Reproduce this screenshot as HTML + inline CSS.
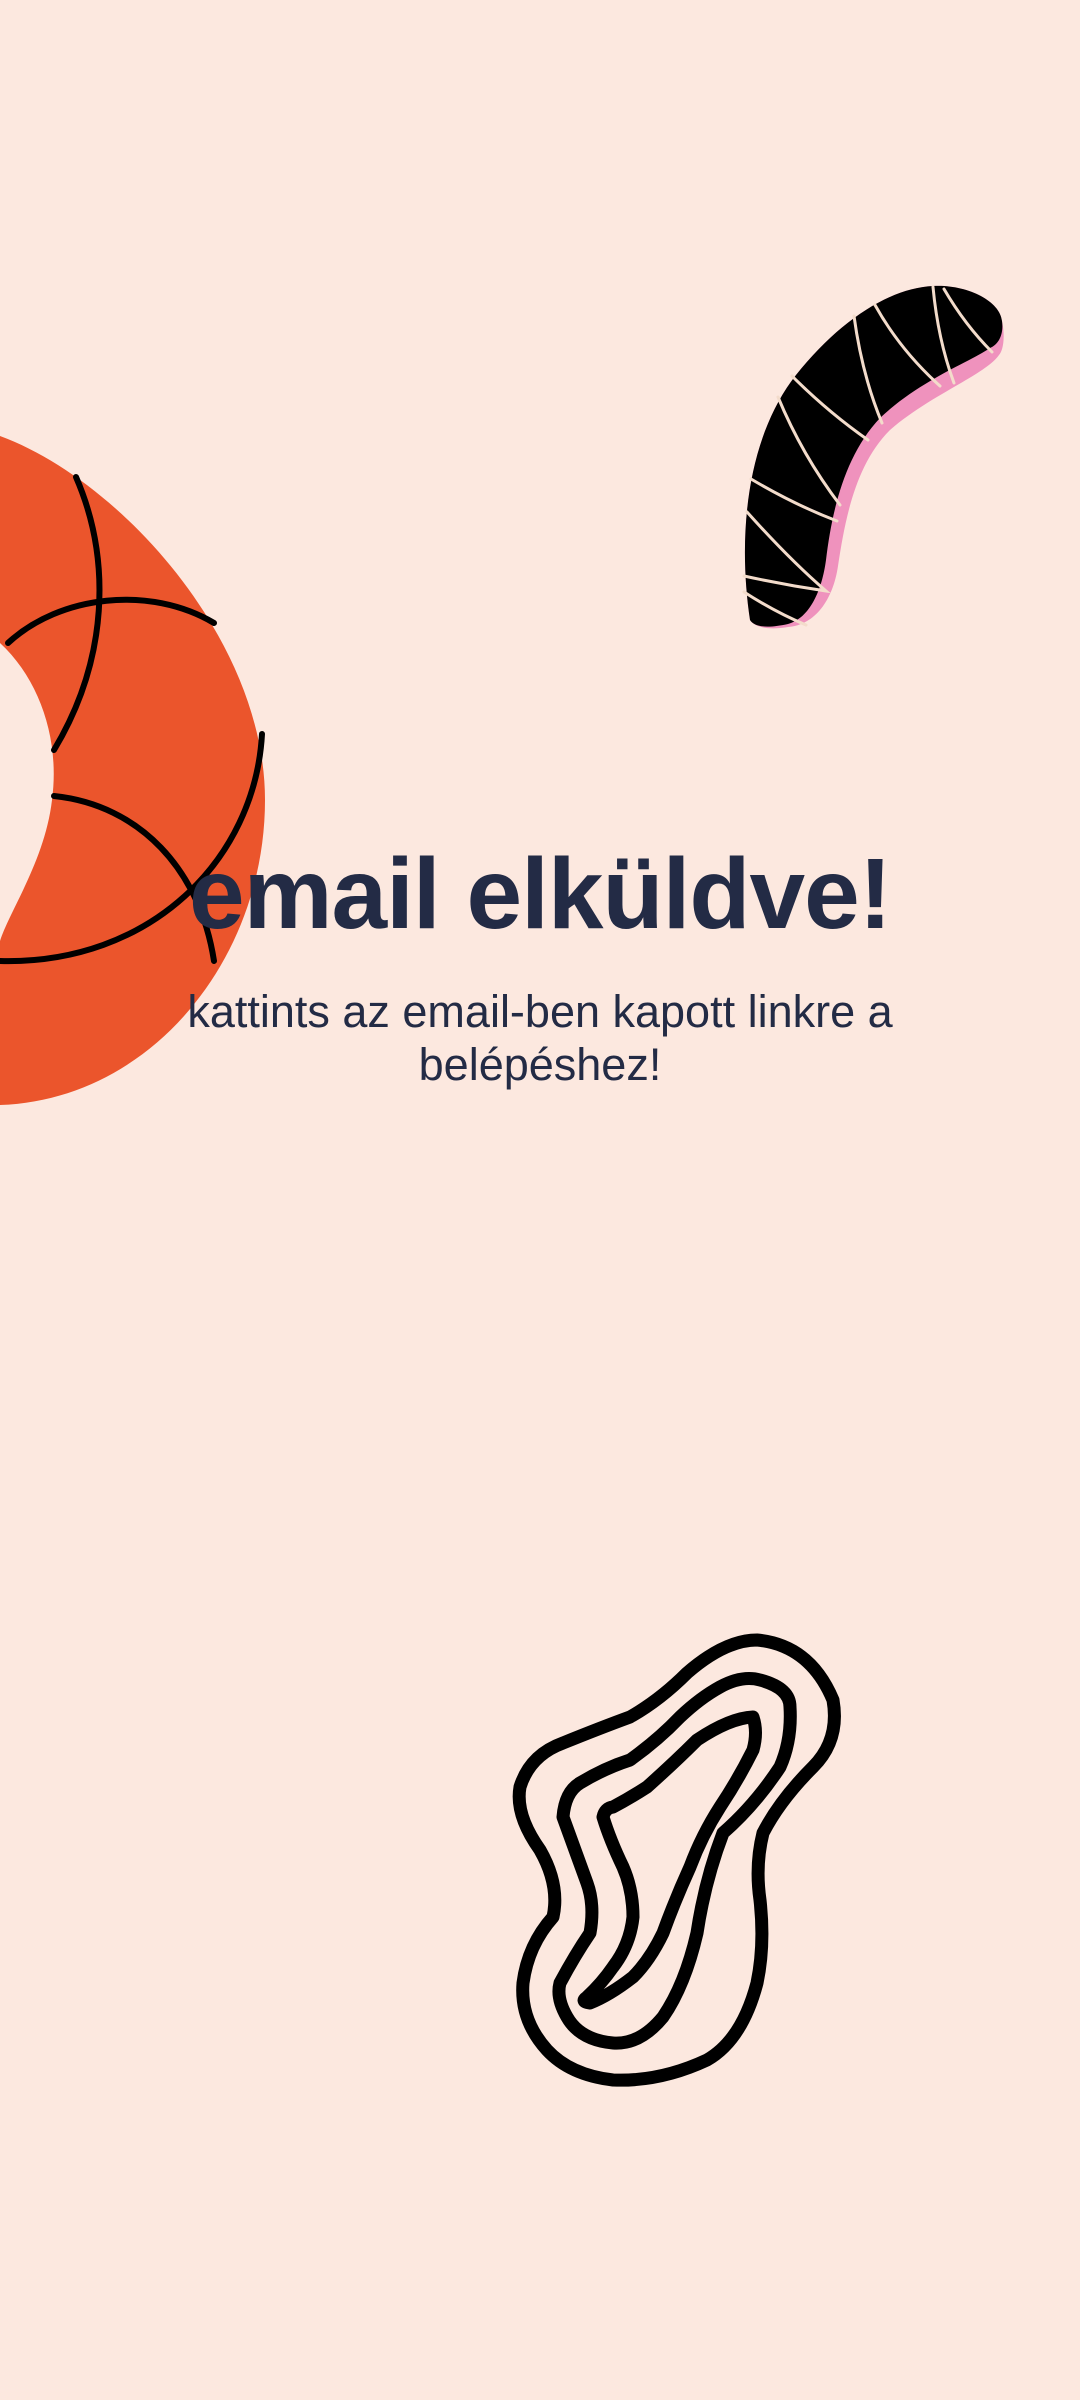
<!DOCTYPE html>
<html><head><meta charset="utf-8"><style>
html,body{margin:0;padding:0;}
body{width:1080px;height:2400px;background:#fce8df;position:relative;overflow:hidden;font-family:"Liberation Sans",sans-serif;}
svg{position:absolute;left:0;top:0;}
h1{position:absolute;left:0;width:1080px;top:834px;margin:0;text-align:center;font-size:100px;font-weight:bold;color:#232b45;letter-spacing:-1px;line-height:120px;}
p{position:absolute;left:100px;width:880px;top:985px;margin:0;text-align:center;font-size:45px;color:#232b45;line-height:53px;}
</style></head><body>
<svg width="1080" height="2400" viewBox="0 0 1080 2400">
  <path fill="#eb552c" fill-rule="evenodd" d="M0,436 C120,480 265,640 265,800 C265,960 150,1100 0,1105 Z M0,643 C40,680 60,740 52,800 C45,860 10,910 0,941 Z"/>
  <g fill="none" stroke="#000" stroke-width="6" stroke-linecap="round">
    <path d="M76,477 C112,560 108,660 54,750"/>
    <path d="M8,643 C60,595 150,585 214,623"/>
    <path d="M262,734 C255,860 150,965 0,961"/>
    <path d="M54,796 C140,805 200,870 214,961"/>
  </g>
  <path fill="#ef92bd" d="M750,620 C738,540 745,440 796,375 C840,320 890,288 933,286 C965,284 1000,300 1002,321 C1006,340 1002,352 999,355 C985,375 930,395 890,430 C855,465 845,520 838,566 C833,600 815,625 788,627 C770,630 755,628 750,620 Z"/>
  <path fill="#000" d="M750,620 C738,540 745,440 796,375 C840,320 890,288 933,286 C965,284 1000,300 1002,321 C1004,335 998,345 990,348 C970,362 920,380 880,418 C845,455 832,510 826,560 C822,590 810,618 788,624 C770,628 755,628 750,620 Z"/>
  <g fill="none" stroke="#f3dccb" stroke-width="3" stroke-linecap="round">
    <path d="M933,287 Q938,340 954,383"/>
    <path d="M944,289 Q965,325 992,352"/>
    <path d="M854,316 Q862,375 882,423"/>
    <path d="M875,305 Q900,350 940,386"/>
    <path d="M792,376 Q828,412 868,440"/>
    <path d="M778,397 Q802,455 840,505"/>
    <path d="M751,479 Q795,505 837,521"/>
    <path d="M747,512 Q790,560 826,591 Q785,585 744,576"/>
    <path d="M744,592 Q775,612 806,625"/>
  </g>
  <g transform="translate(480,1600)" fill="none" stroke="#000" stroke-width="13" stroke-linejoin="round" stroke-linecap="round">
    <path d="M207,73 Q245,40 277,40 Q330,45 353,100 Q360,140 333,167 Q300,200 283,233 Q275,265 280,300 Q285,345 277,383 Q262,440 227,460 Q180,482 133,480 Q90,475 67,450 Q40,420 43,383 Q48,345 73,317 Q80,285 60,250 Q35,215 40,187 Q50,155 83,143 Q120,128 150,117 Q180,100 207,73 Z"/>
    <path d="M240,87 Q262,75 280,80 Q310,88 310,107 Q312,140 300,167 Q275,205 243,233 Q225,280 217,333 Q205,385 183,417 Q160,445 133,443 Q100,440 87,417 Q76,398 80,383 Q95,355 110,333 Q115,305 107,283 Q95,250 83,217 Q85,192 100,183 Q125,168 150,160 Q178,140 200,117 Q220,98 240,87 Z"/>
    <path d="M217,140 Q250,118 273,117 Q278,132 273,150 Q258,180 240,207 Q222,235 210,267 Q195,300 183,333 Q170,360 153,377 Q130,395 110,403 Q100,402 107,397 Q122,383 133,367 Q150,345 153,317 Q153,290 143,267 Q130,240 123,217 Q125,208 133,207 Q150,198 167,187 Q195,162 217,140 Z"/>
  </g>
</svg>
<h1>email elküldve!</h1>
<p>kattints az email-ben kapott linkre a belépéshez!</p>
</body></html>
